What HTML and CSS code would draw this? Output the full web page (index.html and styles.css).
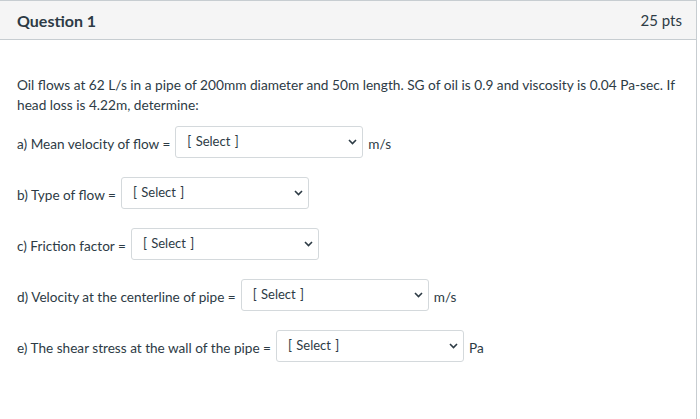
FILE: index.html
```html
<!DOCTYPE html>
<html lang="en">
<head>
<meta charset="utf-8">
<title>Question 1</title>
<link rel="stylesheet" href="styles.css">
</head>
<body>
<div class="question">
  <div class="q-header">
    <span class="q-title">Question 1</span>
    <span class="q-pts">25 pts</span>
  </div>
  <div class="q-body">
    <p class="q-text">Oil flows at 62 L/s in a pipe of 200mm diameter and 50m length. SG of oil is 0.9 and viscosity is 0.04 Pa-sec. If head loss is 4.22m, determine:</p>
    <div class="row">
      <span class="label">a) Mean velocity of flow =</span>
      <div class="select"><span>[ Select ]</span><svg class="chev" width="9" height="6" viewBox="0 0 9 6"><path d="M1 1 L4.5 4.5 L8 1" fill="none" stroke="#2d3b45" stroke-width="1.6"/></svg></div>
      <span class="unit">m/s</span>
    </div>
    <div class="row">
      <span class="label">b) Type of flow =</span>
      <div class="select"><span>[ Select ]</span><svg class="chev" width="9" height="6" viewBox="0 0 9 6"><path d="M1 1 L4.5 4.5 L8 1" fill="none" stroke="#2d3b45" stroke-width="1.6"/></svg></div>
    </div>
    <div class="row">
      <span class="label">c) Friction factor =</span>
      <div class="select"><span>[ Select ]</span><svg class="chev" width="9" height="6" viewBox="0 0 9 6"><path d="M1 1 L4.5 4.5 L8 1" fill="none" stroke="#2d3b45" stroke-width="1.6"/></svg></div>
    </div>
    <div class="row">
      <span class="label">d) Velocity at the centerline of pipe =</span>
      <div class="select"><span>[ Select ]</span><svg class="chev" width="9" height="6" viewBox="0 0 9 6"><path d="M1 1 L4.5 4.5 L8 1" fill="none" stroke="#2d3b45" stroke-width="1.6"/></svg></div>
      <span class="unit">m/s</span>
    </div>
    <div class="row">
      <span class="label">e) The shear stress at the wall of the pipe =</span>
      <div class="select"><span>[ Select ]</span><svg class="chev" width="9" height="6" viewBox="0 0 9 6"><path d="M1 1 L4.5 4.5 L8 1" fill="none" stroke="#2d3b45" stroke-width="1.6"/></svg></div>
      <span class="unit">Pa</span>
    </div>
  </div>
</div>
</body>
</html>
```
FILE: styles.css
```css
html, body {
  margin: 0;
  padding: 0;
  background: #ffffff;
}
body {
  font-family: Lato, "Open Sans", sans-serif;
  color: #2d3b45;
  width: 700px;
  height: 419px;
  overflow: hidden;
}
.question {
  width: 698px;
  height: 430px;
  margin-left: -1px;
  border-top: 1px solid #c7cdd1;
  border-right: 1px solid #c7cdd1;
  border-left: 1px solid #c7cdd1;
  box-sizing: border-box;
}
.q-header {
  display: flex;
  justify-content: space-between;
  align-items: center;
  height: 38px;
  padding: 0 14px 0 17px;
  background: #f5f5f5;
  border-bottom: 1px solid #c7cdd1;
}
.q-title {
  font-size: 16px;
  font-weight: 700;
}
.q-pts {
  font-size: 15px;
  color: #2d3b45;
}
.q-body {
  padding: 35px 17px 0 17px;
  font-size: 13.6px;
}
.q-text {
  margin: 0 0 11px 0;
  line-height: 20px;
  font-size: 13.7px;
}
.row {
  display: flex;
  align-items: center;
  height: 32px;
  margin-bottom: 19px;
}
.label {
  margin-right: 5px;
  padding-top: 4px;
}
.select {
  width: 188px;
  height: 32px;
  box-sizing: border-box;
  border: 1px solid #d4d9dc;
  border-radius: 3px;
  display: flex;
  align-items: center;
  justify-content: space-between;
  padding: 0 5px 0 11px;
  font-size: 13px;
}
.select span {
  margin-top: -2px;
  word-spacing: 1px;
}
.chev {
  display: block;
}
.unit {
  margin-left: 5px;
  padding-top: 4px;
}
```
